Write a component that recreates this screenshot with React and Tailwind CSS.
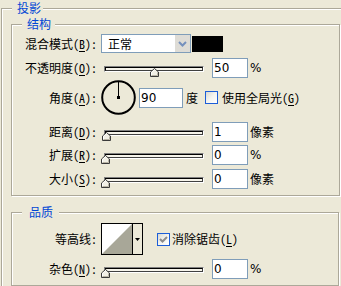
import React from "react";

const FONT = "font-['Noto_Sans_Mono_CJK_SC','Noto_Sans_CJK_SC',sans-serif]";

function Legend({ children, className }) {
  return (
    <div className={`absolute top-[-8px] left-[10px] bg-[#ece9d8] text-[#0046d5] text-[12px] leading-[14px] ${className}`}>
      {children}
    </div>
  );
}

function U({ children }) {
  return <span className="underline underline-offset-[2px]">{children}</span>;
}

function Label({ children }) {
  return <div className="w-[85px] shrink-0 text-right text-[12px] leading-[14px] text-black whitespace-nowrap">{children}</div>;
}

function Input({ value, className }) {
  return (
    <div className={`h-[20px] border border-[#7f9db9] bg-white flex items-center pl-[1px] text-[12px] text-black font-['DejaVu_Sans',sans-serif] leading-none ${className}`}>
      {value}
    </div>
  );
}

function Thumb() {
  return (
    <svg width="9" height="9" viewBox="0 0 9 9" className="block">
      <path d="M0.5 8.5 V4 L4.5 0.5 L8.5 4 V8.5 Z" fill="#f2f0e6" stroke="#3a3a3a" strokeWidth="1" />
      <path d="M1.5 7.5 V4.4 L4.5 1.8" fill="none" stroke="#ffffff" strokeWidth="1" />
      <path d="M1.5 7.5 H7.5 V4.4" fill="none" stroke="#b8b4a4" strokeWidth="1" />
    </svg>
  );
}

function Slider({ value }) {
  return (
    <div className="relative ml-[4px] w-[104px] h-[20px] shrink-0">
      <div className="ml-[3px] mt-[8px] w-[100px] h-[6px] border border-t-[#808080] border-l-[#808080] border-b-white border-r-white">
        <div className="h-full border border-t-black border-l-black border-b-[#404040] border-r-[#404040] bg-[#f5f3ea]" />
      </div>
      <div className="absolute top-[10px]" style={{ left: Math.round((value / 100) * 98) }}>
        <Thumb />
      </div>
    </div>
  );
}

function Unit({ children }) {
  return <div className="ml-[2px] text-[12px] leading-[14px] text-black">{children}</div>;
}

function Pct() {
  return <div className="ml-[2px] text-[12px] leading-[14px] text-black font-['DejaVu_Sans',sans-serif]">%</div>;
}

function SliderRow({ label, value, unit, className }) {
  return (
    <div className={`flex items-center h-[20px] ${className}`}>
      <Label>{label}</Label>
      <Slider value={value} />
      <Input value={value} className="ml-[7px] w-[36px]" />
      {unit === "%" ? <Pct /> : <Unit>{unit}</Unit>}
    </div>
  );
}

function Checkbox({ checked }) {
  return (
    <div className="w-[13px] h-[13px] shrink-0 border border-[#1c5ed8] bg-gradient-to-br from-[#d8d8d0] via-[#f4f4f0] to-white flex items-center justify-center">
      {checked && (
        <svg width="9" height="9" viewBox="0 0 9 9">
          <path d="M1 4 L3.5 6.5 L8 2" fill="none" stroke="#8c8c8c" strokeWidth="2" />
        </svg>
      )}
    </div>
  );
}

export default function App() {
  return (
    <div className={`w-[341px] h-[286px] overflow-hidden bg-[#ece9d8] pt-[8px] pl-[1px] ${FONT}`}>
      <div className="relative w-[360px] h-[300px] border border-[#aca899] shadow-[inset_1px_1px_0_#fff] pt-[15px] pl-[9px]">
        <Legend className="pl-[5px] pr-[2px]">投影</Legend>

        {/* 结构 */}
        <div className="relative w-[329px] h-[172px] border border-[#aca899] shadow-[inset_1px_1px_0_#fff,1px_1px_0_#fff]">
          <Legend className="pl-[5px] pr-[4px]">结构</Legend>

          <div className="mt-[9px] flex items-center h-[19px]">
            <Label>混合模式(<U>B</U>):</Label>
            <div className="ml-[4px] w-[90px] h-[19px] border border-[#7f9db9] bg-white flex items-center">
              <div className="flex-1 pl-[6px] text-[12px] leading-[14px] text-black">正常</div>
              <div className="w-[16px] h-[17px] bg-[#dedcd6] border-l border-white flex items-center justify-center">
                <svg width="9" height="6" viewBox="0 0 9 6">
                  <path d="M1 1 L4.5 4.5 L8 1" fill="none" stroke="#7590bd" strokeWidth="2" />
                </svg>
              </div>
            </div>
            <div className="ml-[1px] w-[31px] h-[16px] bg-black" />
          </div>

          <SliderRow
            className="mt-[5px]"
            label={<>不透明度(<U>O</U>):</>}
            value={50}
            unit="%"
          />

          <div className="mt-[2px] flex items-center h-[35px]">
            <Label>角度(<U>A</U>):</Label>
            <svg width="35" height="35" viewBox="0 0 35 35" className="ml-[4px] shrink-0">
              <circle cx="17.5" cy="17.5" r="16.3" fill="none" stroke="#000" strokeWidth="2" />
              <line x1="17.5" y1="2" x2="17.5" y2="17" stroke="#000" strokeWidth="1" />
              <rect x="16" y="16" width="3" height="3" fill="#000" />
            </svg>
            <Input value="90" className="ml-[3px] w-[44px]" />
            <div className="ml-[3px] text-[12px] leading-[14px] text-black">度</div>
            <div className="ml-[7px]">
              <Checkbox checked={false} />
            </div>
            <div className="ml-[4px] text-[12px] leading-[14px] text-black whitespace-nowrap">使用全局光(<U>G</U>)</div>
          </div>

          <SliderRow className="mt-[7px]" label={<>距离(<U>D</U>):</>} value={1} unit="像素" />
          <SliderRow className="mt-[3px]" label={<>扩展(<U>R</U>):</>} value={0} unit="%" />
          <SliderRow className="mt-[4px]" label={<>大小(<U>S</U>):</>} value={0} unit="像素" />
        </div>

        {/* 品质 */}
        <div className="relative mt-[16px] w-[328px] h-[74px] border border-[#aca899] shadow-[inset_1px_1px_0_#fff,1px_1px_0_#fff]">
          <Legend className="pl-[7px] pr-[6px]">品质</Legend>

          <div className="mt-[10px] flex items-center h-[32px]">
            <Label>等高线:</Label>
            <div className="ml-[4px] w-[42px] h-[32px] border border-black flex shrink-0">
              <svg width="30" height="30" viewBox="0 0 30 30" className="block">
                <rect x="0" y="0" width="30" height="30" fill="#fff" />
                <polygon points="0,30 30,0 30,30" fill="#a8a798" />
              </svg>
              <div className="w-px h-full bg-black" />
              <div className="flex-1 flex items-center justify-center">
                <svg width="5" height="3" viewBox="0 0 5 3">
                  <polygon points="0,0 5,0 2.5,3" fill="#000" />
                </svg>
              </div>
            </div>
            <div className="ml-[14px]">
              <Checkbox checked={true} />
            </div>
            <div className="ml-[2px] text-[12px] leading-[14px] text-black whitespace-nowrap">消除锯齿(<U>L</U>)</div>
          </div>

          <SliderRow className="mt-[4px]" label={<>杂色(<U>N</U>):</>} value={0} unit="%" />
        </div>
      </div>
    </div>
  );
}
